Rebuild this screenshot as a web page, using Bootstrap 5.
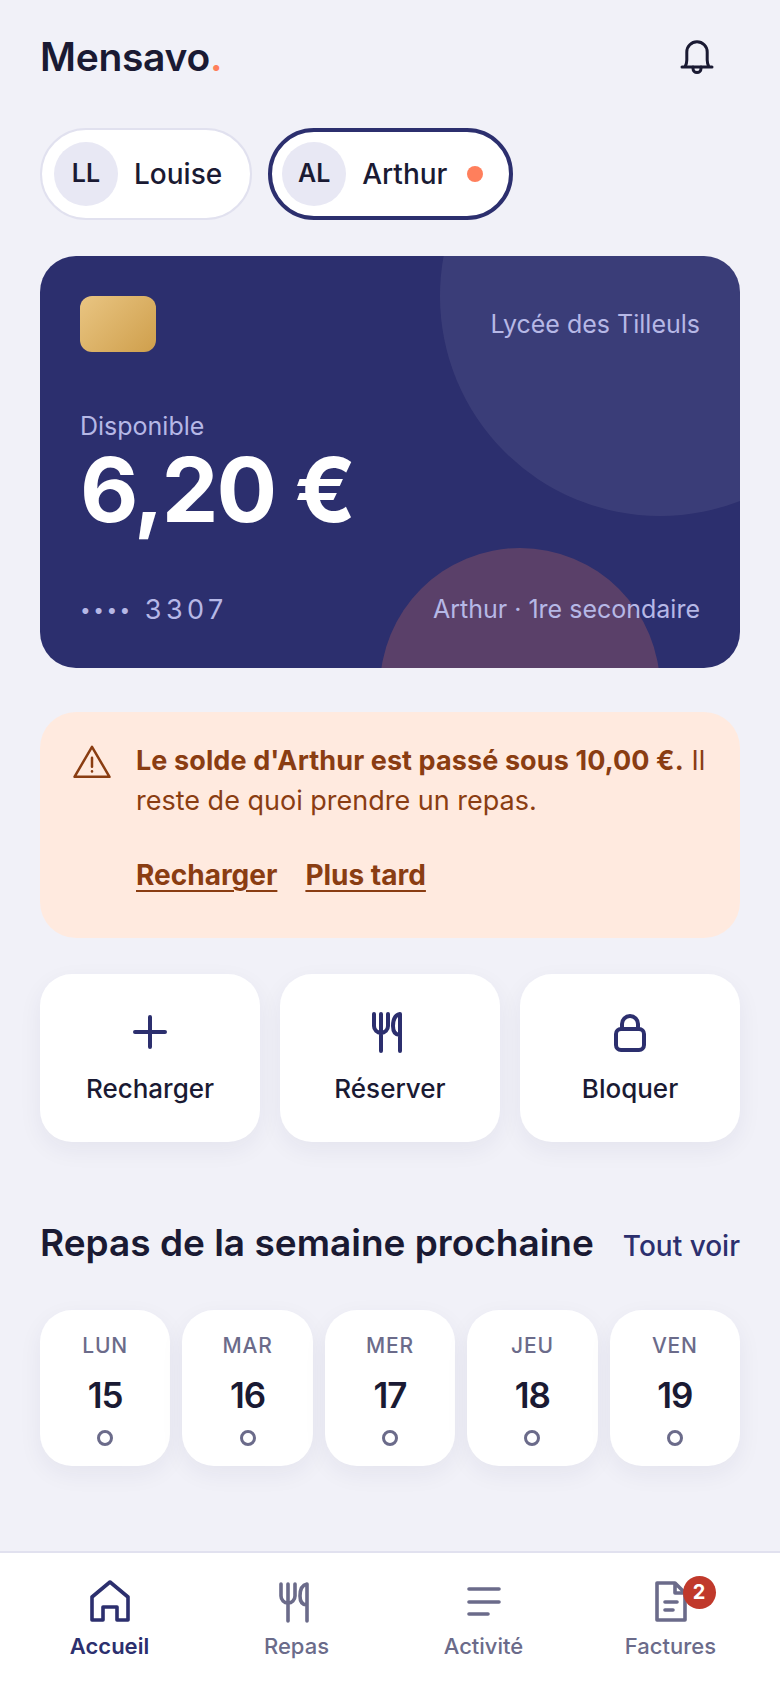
<!DOCTYPE html>
<html lang="fr">
<head>
<meta charset="UTF-8">
<meta name="viewport" content="width=device-width, initial-scale=1.0">
<link rel="stylesheet" href="https://cdn.jsdelivr.net/npm/bootstrap@5.3.3/dist/css/bootstrap.min.css">
<title>Mensavo</title>
<style>
  body { background: #f1f1f8; color: #1a1a33; font-family: Inter, "Liberation Sans", sans-serif; min-height: 1688px; }
  .page-main { padding: 0 40px; }
  .top-bar { height: 112px; }
  .logo-text { font-size: 39px; font-weight: 600; letter-spacing: -0.3px; line-height: 1; }
  .logo-text span { color: #ff7f5c; }
  .bell-btn { width: 48px; height: 48px; margin-right: 19px; background: none; border: 0; padding: 0; color: #1a1a33; }
  .kid-pill { height: 92px; background: #fff; border: 2px solid #e1e1ef; border-radius: 46px; padding: 0 28px 0 12px; gap: 16px; margin-top: 16px; }
  .kid-pill.is-active { border: 4px solid #2c2f6e; padding: 0 26px 0 10px; }
  .kid-avatar { width: 64px; height: 64px; background: #e8e8f4; border-radius: 50%; font-size: 25px; font-weight: 600; }
  .kid-name { font-size: 28px; font-weight: 500; }
  .kid-dot { width: 16px; height: 16px; background: #ff7f5c; border-radius: 50%; margin-left: 4px; }
  .balance-card { height: 412px; margin-top: 36px; background: #2c2f6e; border-radius: 36px; padding: 40px 40px 38px 40px; color: #b6b8e6; font-size: 25px; position: relative; overflow: hidden; border: 0; }
  .blob-a { position: absolute; width: 440px; height: 440px; top: -180px; right: -140px; border-radius: 50%; background: rgba(255,255,255,.07); }
  .blob-b { position: absolute; width: 280px; height: 280px; bottom: -160px; right: 80px; border-radius: 50%; background: rgba(255,127,92,.22); }
  .balance-card > div { position: relative; }
  .gold-chip { width: 76px; height: 56px; border-radius: 12px; background: linear-gradient(135deg, #e9c582, #cf9f4c); }
  .school-name { margin-top: 10px; }
  .balance-block { margin-top: 56px; }
  .amount-text { color: #fff; font-size: 90px; font-weight: 700; line-height: 88px; letter-spacing: -2px; }
  .card-num { font-size: 27px; letter-spacing: 4.5px; }
  .card-dots { font-size: 19px; letter-spacing: 2.5px; margin-right: 12px; vertical-align: 2px; }
  .warn-box { margin-top: 44px; height: 226px; background: #ffeadf; color: #8a3d12; border-radius: 36px; padding: 29px 24px 0 32px; gap: 24px; font-size: 27px; line-height: 40px; }
  .warn-box svg { flex: none; }
  .warn-box b { font-weight: 700; letter-spacing: .1px; }
  .warn-links { margin-top: 37px; gap: 28px; }
  .warn-links a { color: #8a3d12; font-size: 28px; font-weight: 700; line-height: 34px; text-decoration-thickness: 2px; text-underline-offset: 5px; }
  .action-row { margin-top: 36px; gap: 20px; }
  .action-tile { flex: 1 1 0; height: 168px; background: #fff; border: 0; border-radius: 32px; box-shadow: 0 8px 24px rgba(30,30,80,.06); color: #1a1a33; font-size: 26px; font-weight: 500; padding: 0; }
  .action-tile:hover { background: #fff; color: #1a1a33; }
  .action-tile svg { display: block; margin: -1px auto 13px; color: #2c2f6e; }
  .section-head { margin-top: 70px; height: 62px; }
  .section-head h2 { font-size: 37px; font-weight: 600; margin: 0; }
  .section-head a { color: #2c2f6e; font-size: 28px; font-weight: 500; text-decoration: none; margin-top: 5px; }
  .day-row { margin-top: 36px; gap: 12px; }
  .day-tile { flex: 1 1 0; height: 156px; background: #fff; border-radius: 32px; box-shadow: 0 8px 24px rgba(30,30,80,.06); padding-top: 22px; }
  .day-name { color: #6b6b8a; font-size: 21px; font-weight: 500; letter-spacing: .8px; line-height: 28px; }
  .day-num { font-size: 35px; font-weight: 600; line-height: 40px; margin-top: 15px; letter-spacing: -1px; }
  .day-ring { width: 16px; height: 16px; border: 3px solid #6b6b8a; border-radius: 50%; margin: 15px auto 0; }
  .tab-bar { height: 137px; background: #fff; border-top: 2px solid #e1e1ef; padding: 25px 16px 0; margin-top: auto; }
  .tab-bar .nav-link { color: #6b6b8a; padding: 0; font-size: 22px; font-weight: 500; line-height: 28px; }
  .tab-bar .nav-link.active { color: #2c2f6e; font-weight: 600; }
  .tab-bar svg { display: block; margin: 0 auto 6px; }
  .tab-icon-wrap { position: relative; display: block; width: 48px; margin: 0 auto; }
  .count-badge { position: absolute; top: -2px; left: 36px; width: 33px; height: 33px; line-height: 33px; padding: 0; border-radius: 50%; background: #c0392b; color: #fff; font-size: 20px; font-weight: 700; }
</style>
</head>
<body class="d-flex flex-column">
<main class="page-main">
  <div class="top-bar d-flex justify-content-between align-items-center">
    <div class="logo-text">Mensavo<span>.</span></div>
    <button class="bell-btn" type="button" aria-label="Notifications">
      <svg width="48" height="48" viewBox="0 0 24 24" fill="none" stroke="currentColor" stroke-width="1.5" stroke-linecap="round" stroke-linejoin="round"><path d="M4.500 17.500h15M6 17.500c.6-1 .9-2 .9-3.500V10a5.100 5.100 0 0 1 10.200 0v4c0 1.500.3 2.500.9 3.500"/><path d="M10 17.500v.8a2 2 0 0 0 4 0v-.8"/></svg>
    </button>
  </div>

  <div class="d-flex gap-3">
    <div class="kid-pill d-flex align-items-center">
      <div class="kid-avatar d-flex align-items-center justify-content-center">LL</div>
      <div class="kid-name">Louise</div>
    </div>
    <div class="kid-pill is-active d-flex align-items-center">
      <div class="kid-avatar d-flex align-items-center justify-content-center">AL</div>
      <div class="kid-name">Arthur</div>
      <div class="kid-dot"></div>
    </div>
  </div>

  <section class="balance-card d-flex flex-column">
    <span class="blob-a"></span>
    <span class="blob-b"></span>
    <div class="d-flex justify-content-between align-items-start">
      <div class="gold-chip"></div>
      <div class="school-name">Lycée des Tilleuls</div>
    </div>
    <div class="balance-block">
      <div>Disponible</div>
      <div class="amount-text">6,20 €</div>
    </div>
    <div class="d-flex justify-content-between align-items-center mt-auto">
      <div class="card-num"><span class="card-dots">••••</span>3307</div>
      <div>Arthur · 1re secondaire</div>
    </div>
  </section>

  <section class="warn-box d-flex">
    <svg width="40" height="40" viewBox="0 0 24 24" fill="none" stroke="currentColor" stroke-width="1.5" stroke-linejoin="round" stroke-linecap="round"><path d="M12 3.500 22.500 21.500h-21z"/><path d="M12 10v5.500"/><path d="M12 18.200v.1"/></svg>
    <div>
      <div><b>Le solde d'Arthur est passé sous 10,00 €.</b> Il reste de quoi prendre un repas.</div>
      <div class="warn-links d-flex">
        <a href="#">Recharger</a>
        <a href="#">Plus tard</a>
      </div>
    </div>
  </section>

  <div class="action-row d-flex">
    <button class="btn action-tile" type="button">
      <svg width="48" height="48" viewBox="0 0 24 24" fill="none" stroke="currentColor" stroke-width="2" stroke-linecap="round"><path d="M12 4.500v15M4.500 12h15"/></svg>
      Recharger
    </button>
    <button class="btn action-tile" type="button">
      <svg width="48" height="48" viewBox="0 0 24 24" fill="none" stroke="currentColor" stroke-width="2" stroke-linecap="round" stroke-linejoin="round"><path d="M4 3v6a3.500 3.500 0 0 0 7 0V3M7.500 3v18.500M17 21.500V3c-2.500.5-3.500 3-3.500 6 0 3 1 4.500 3.500 4.500"/></svg>
      Réserver
    </button>
    <button class="btn action-tile" type="button">
      <svg width="48" height="48" viewBox="0 0 24 24" fill="none" stroke="currentColor" stroke-width="2" stroke-linecap="round" stroke-linejoin="round"><rect x="5" y="10.500" width="14" height="10.500" rx="2.500"/><path d="M8 10.500V8a4 4 0 0 1 8 0v2.500"/></svg>
      Bloquer
    </button>
  </div>

  <div class="section-head d-flex justify-content-between align-items-center">
    <h2>Repas de la semaine prochaine</h2>
    <a href="#">Tout voir</a>
  </div>

  <div class="day-row d-flex text-center">
    <div class="day-tile"><div class="day-name">LUN</div><div class="day-num">15</div><div class="day-ring"></div></div>
    <div class="day-tile"><div class="day-name">MAR</div><div class="day-num">16</div><div class="day-ring"></div></div>
    <div class="day-tile"><div class="day-name">MER</div><div class="day-num">17</div><div class="day-ring"></div></div>
    <div class="day-tile"><div class="day-name">JEU</div><div class="day-num">18</div><div class="day-ring"></div></div>
    <div class="day-tile"><div class="day-name">VEN</div><div class="day-num">19</div><div class="day-ring"></div></div>
  </div>
</main>

<nav class="tab-bar nav nav-justified align-items-start">
  <a class="nav-link active" href="#">
    <svg width="48" height="48" viewBox="0 0 24 24" fill="none" stroke="currentColor" stroke-width="1.800" stroke-linejoin="round"><path d="M3 21V9.500L12 2l9 7.500V21h-5.500v-6.500h-7V21z"/></svg>
    Accueil
  </a>
  <a class="nav-link" href="#">
    <svg width="48" height="48" viewBox="0 0 24 24" fill="none" stroke="currentColor" stroke-width="1.800" stroke-linecap="round" stroke-linejoin="round"><path d="M4 3v6a3.500 3.500 0 0 0 7 0V3M7.500 3v18.500M17 21.500V3c-2.500.5-3.500 3-3.500 6 0 3 1 4.500 3.500 4.500"/></svg>
    Repas
  </a>
  <a class="nav-link" href="#">
    <svg width="48" height="48" viewBox="0 0 24 24" fill="none" stroke="currentColor" stroke-width="1.800" stroke-linecap="round"><path d="M4.500 5.500h15M4.500 12h15M4.500 18h9.500"/></svg>
    Activité
  </a>
  <a class="nav-link" href="#">
    <span class="tab-icon-wrap">
      <svg width="48" height="48" viewBox="0 0 24 24" fill="none" stroke="currentColor" stroke-width="1.800" stroke-linecap="round" stroke-linejoin="round"><path d="M5 2.500h9l5 5V21H5zM14 2.500v5h5M9 12h6M9 16h4"/></svg>
      <span class="badge count-badge">2</span>
    </span>
    Factures
  </a>
</nav>
<script src="https://cdn.jsdelivr.net/npm/bootstrap@5.3.3/dist/js/bootstrap.bundle.min.js"></script>
</body>
</html>
